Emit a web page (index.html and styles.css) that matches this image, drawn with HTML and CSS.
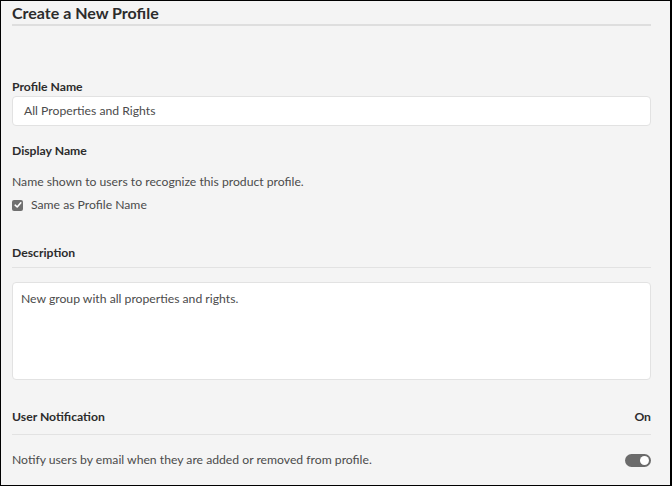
FILE: index.html
```html
<!DOCTYPE html>
<html>
<head>
<meta charset="utf-8">
<link rel="stylesheet" href="styles.css">
</head>
<body>
<div class="frame">
  <h1 class="title">Create a New Profile</h1>
  <div class="field profile-name">
    <div class="label">Profile Name</div>
    <div class="input">All Properties and Rights</div>
  </div>
  <div class="field display-name">
    <div class="label">Display Name</div>
    <div class="help">Name shown to users to recognize this product profile.</div>
    <div class="check-row">
      <span class="checkbox"><svg width="8" height="8" viewBox="0 0 8 8"><path d="M1.2 4.2 L3.2 6 L6.8 1.8" fill="none" stroke="#fff" stroke-width="1.6" stroke-linecap="round" stroke-linejoin="round"/></svg></span>
      <span class="check-label">Same as Profile Name</span>
    </div>
  </div>
  <div class="field description">
    <div class="label section">Description</div>
    <div class="textarea">New group with all properties and rights.</div>
  </div>
  <div class="field notification">
    <div class="label section notif-head row"><span>User Notification</span><span class="on">On</span></div>
    <div class="help row notify"><span>Notify users by email when they are added or removed from profile.</span><span class="toggle"><span class="knob"></span></span></div>
  </div>
</div>
</body>
</html>
```
FILE: styles.css
```css
html, body { margin: 0; padding: 0; }
body {
  width: 672px;
  height: 486px;
  overflow: hidden;
  font-family: "Lato", "Open Sans", sans-serif;
}
.frame {
  box-sizing: border-box;
  width: 672px;
  height: 486px;
  border: 1px solid #000;
  border-right-width: 2px;
  background: #f4f4f4;
  padding: 0 19px 0 11px;
  color: #4b4b4b;
  font-size: 12.2px;
}
.title {
  margin: 0;
  font-size: 16px;
  font-weight: bold;
  color: #2c2c2c;
  line-height: 20px;
  padding-top: 2px;
  padding-bottom: 1px;
  border-bottom: 2px solid #dedede;
}
.label {
  font-weight: bold;
  color: #2c2c2c;
  line-height: 18px;
}
.profile-name { margin-top: 52px; }
.input {
  height: 28px;
  line-height: 28px;
  background: #fff;
  border: 1px solid #e2e2e2;
  border-radius: 4px;
  padding-left: 11px;
}
.display-name { margin-top: 16px; }
.help { line-height: 18px; }
.display-name .help { margin-top: 13px; }
.check-row {
  display: flex;
  align-items: center;
  gap: 8px;
  margin-top: 5px;
  line-height: 18px;
}
.checkbox {
  width: 11px;
  height: 11px;
  border-radius: 2px;
  background: #6f6f6f;
  display: flex;
  align-items: center;
  justify-content: center;
}
.description { margin-top: 30px; }
.section {
  padding-bottom: 5px;
  border-bottom: 1px solid #e2e2e2;
}
.textarea {
  margin-top: 14px;
  height: 98px;
  box-sizing: border-box;
  background: #fff;
  border: 1px solid #e2e2e2;
  border-radius: 4px;
  padding: 7px 8px;
  line-height: 18px;
}
.notification { margin-top: 28px; }
.notif-head { padding-bottom: 8px; }
.row {
  display: flex;
  justify-content: space-between;
  align-items: center;
}
.on { font-weight: bold; }
.notify { margin-top: 16px; }
.toggle {
  width: 26px;
  height: 13px;
  border-radius: 7px;
  background: #6b6b6b;
  position: relative;
}
.knob {
  position: absolute;
  right: 2px;
  top: 2px;
  width: 9px;
  height: 9px;
  border-radius: 50%;
  background: #fff;
}
```
